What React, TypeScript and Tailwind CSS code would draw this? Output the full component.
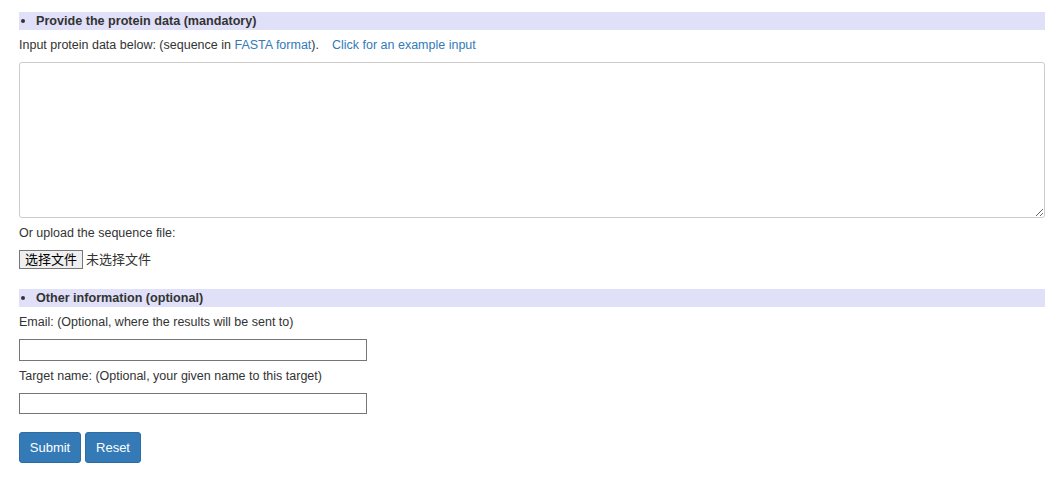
export default function App() {
  return (
    <div className="min-h-screen bg-white px-[19px] pt-3 text-[12.5px] leading-[17px] text-[#333] [font-family:'Liberation_Sans',Arial,'Noto_Sans_CJK_SC',sans-serif]">
      <div className="mr-[-5px] max-w-[1026px]">
        {/* protein data */}
        <div className="flex h-[18px] items-center bg-[#e0e0f8] font-bold text-[12.6px]">
          <span className="ml-[2px] mr-[11px] h-[4px] w-[4px] rounded-full bg-[#333]" />
          Provide the protein data (mandatory)
        </div>
        <p className="mt-[7px]">
          Input protein data below: (sequence in{" "}
          <a href="#" className="text-[#337ab7]">FASTA format</a>).
          <a href="#" className="ml-[13px] text-[#337ab7]">Click for an example input</a>
        </p>
        <textarea className="mt-[8px] block h-[156px] w-full rounded-[3px] border border-[#ccc] p-2" />
        <p className="mt-[7px]">Or upload the sequence file:</p>
        <div className="mt-[8px] flex items-center">
          <button className="h-[19px] border border-[#767676] bg-[#efefef] px-[5px] text-[13px] leading-[17px] text-black">
            选择文件
          </button>
          <span className="ml-[3px] text-[13px]">未选择文件</span>
        </div>

        {/* other info */}
        <div className="mt-[20px] flex h-[18px] items-center bg-[#e0e0f8] font-bold text-[12.6px]">
          <span className="ml-[2px] mr-[11px] h-[4px] w-[4px] rounded-full bg-[#333]" />
          Other information (optional)
        </div>
        <p className="mt-[7px]">Email: (Optional, where the results will be sent to)</p>
        <input className="mt-[8px] block h-[22px] w-[348px] border border-[#767676]" />
        <p className="mt-[7px]">Target name: (Optional, your given name to this target)</p>
        <input className="mt-[8px] block h-[21px] w-[348px] border border-[#767676]" />
        <div className="mt-[18px] flex gap-1">
          <button className="h-[31px] w-[62px] rounded-[3px] border border-[#2e6da4] bg-[#337ab7] text-[13px] text-white">
            Submit
          </button>
          <button className="h-[31px] w-[56px] rounded-[3px] border border-[#2e6da4] bg-[#337ab7] text-[13px] text-white">
            Reset
          </button>
        </div>
      </div>
    </div>
  );
}
